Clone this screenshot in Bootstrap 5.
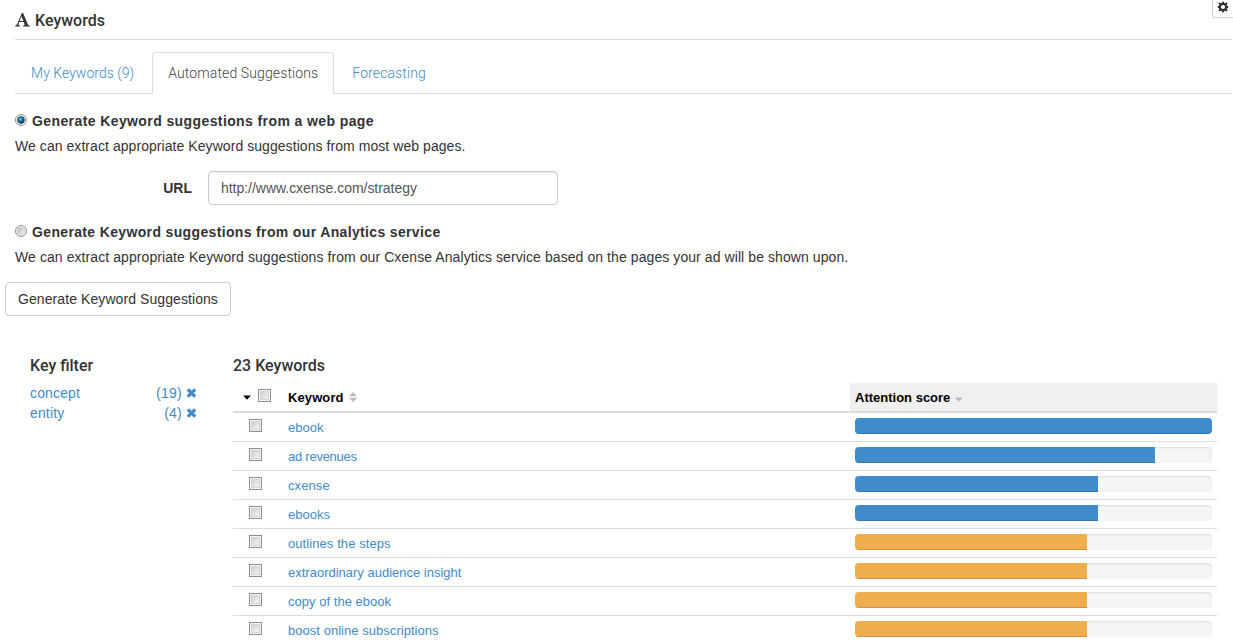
<!DOCTYPE html>
<html lang="en">
<head>
<meta charset="utf-8">
<title>Keywords</title>
<meta name="viewport" content="width=device-width, initial-scale=1">
<link href="https://cdn.jsdelivr.net/npm/bootstrap@5.3.0/dist/css/bootstrap.min.css" rel="stylesheet">
<style>
:root{--ui:"Liberation Sans",Arial,sans-serif;--head:Roboto,sans-serif;--blue:#428bca;--line:#ddd}
html,body{overflow:hidden}
body{font:14px/20px var(--ui);color:#333;background:#fff;height:644px}
a{color:var(--blue);text-decoration:none}
.page{padding-left:15px;padding-right:1px}
.title-bar{height:40px;border-bottom:1px solid var(--line);position:relative}
.heading{font:500 16px/20px var(--head);margin:0}
.heading span{position:relative;top:1px}
.gear{position:absolute;right:-1px;top:-5px;width:21px;height:23px;border:1px solid #ccc;border-right:0;border-radius:0 0 0 3px;padding:5px 0 0 4px;background:#fff;line-height:1}
.gear svg{display:block}
.nav-tabs{margin-top:12px;height:42px;--bs-nav-tabs-border-color:#ddd;font:300 14px/20px var(--head)}
.nav-tabs .nav-link{height:42px;padding:10px 15px;border-radius:4px 4px 0 0;color:var(--blue);margin-right:2px}
.nav-tabs .nav-link.active{color:#444;border-color:#ddd #ddd #fff}
.t-my{letter-spacing:.03px}.t-auto{letter-spacing:.12px}.t-fore{letter-spacing:.11px}
.opt{font-weight:700;height:20px;gap:5px}
.t-opt1{letter-spacing:.4px}.t-opt2{letter-spacing:.35px}
.t-p1{letter-spacing:.06px}.t-p2{letter-spacing:.08px}
.t-link{letter-spacing:-.03px}.t-gen{letter-spacing:.08px}.t-con{letter-spacing:.15px}
.radio-dot{width:12px;height:12px;flex:none;margin-top:-2px}
.url-label{width:177px;font-weight:700;text-align:right}
.url-box{width:350px;height:34px;padding:6px 12px;font-size:14px;line-height:20px;color:#555;border:1px solid #ccc;border-radius:4px;box-shadow:inset 0 1px 1px rgba(0,0,0,.075)}
.gen{margin-left:-10px;width:226px;height:34px;padding:6px 0;font-size:14px;line-height:20px;border:1px solid #ccc;border-radius:4px;background:#fff;color:#333}
.filter{width:168px;margin:0 35px 0 15px}
.count{letter-spacing:.25px}
.cross{width:11px;height:10px;margin:5px 1px 0 4px}
.kw-table{width:984px;font-size:13px}
.kw-row{height:29px;border-bottom:1px solid var(--line)}
.kw-head{height:30px;border-bottom:2px solid var(--line);font-weight:700;color:#000}
.kw-head span{padding-top:2px}
.c-check{width:50px}.c-name{width:567px;padding-left:5px}.c-score{width:367px;padding:0 5px}
.kw-head .c-score{background:#f0f0f0;height:28px}
.box{display:block;width:13px;height:13px;border:1px solid #8e8f8f;background:linear-gradient(135deg,#c3c6ce,#f6f6f6 85%);box-shadow:inset 0 0 0 1px #f4f4f4,inset 0 0 0 2px #d0d2d6}
.kw-row .box{margin:-3px 0 0 16px}
.kw-row .c-name{padding-top:2px}
.progress{height:16px;margin-top:-2px;border-radius:4px;background:#f5f5f5;box-shadow:inset 0 1px 2px rgba(0,0,0,.1)}
.progress-bar{background:var(--blue);box-shadow:inset 0 -1px 0 rgba(0,0,0,.15)}
.progress-bar.amber{background:#f0ad4e}
</style>
</head>
<body>
<svg class="position-absolute" width="0" height="0"><defs>
<symbol id="cross" viewBox="0 0 11 10"><path d="M1.800 1.300l7.400 7.400M9.200 1.300L1.800 8.700" stroke="#428bca" stroke-width="3.200" fill="none"/></symbol>
<radialGradient id="ball" cx=".4" cy=".35" r=".7"><stop offset="0" stop-color="#8fd8fa"/><stop offset=".35" stop-color="#2486bd"/><stop offset="1" stop-color="#072c48"/></radialGradient>
<linearGradient id="well" x2="1" y2="1"><stop offset="0" stop-color="#b4b7bb"/><stop offset="1" stop-color="#f7f7f7"/></linearGradient>
</defs></svg>
<main class="page">
  <header class="title-bar d-flex">
    <h1 class="heading d-flex" style="padding-top:10px">
      <svg width="15" height="14" viewBox="0 0 15 14" style="margin:3px 5px 0 0"><path d="M6.900 0h1.200l4.800 11.500q.4 1 1.800 1v.9H8.200v-.9q1.700 0 1.300-1.200L8.800 9H4.300l-.7 1.900q-.5 1.600 1.300 1.600v.9H.3v-.9q1.300-.1 1.900-1.500zM6.500 3.300L4.700 8h3.700z" fill="#333"/></svg>
      <span>Keywords</span></h1>
    <div class="gear"><svg width="12" height="12" viewBox="0 0 12 12"><g stroke="#333" fill="none"><circle cx="6" cy="6" r="3.200" stroke-width="2.200"/><path d="M6 .8v2M6 9.200v2M.8 6h2M9.200 6h2M2 2l1.400 1.400M8.600 8.600L10 10M2 10l1.400-1.400M8.600 3.400L10 2" stroke-width="2"/></g></svg></div>
  </header>
  <ul class="nav nav-tabs">
    <li class="nav-item"><a class="nav-link" href="#"><span class="t-my">My Keywords (9)</span></a></li>
    <li class="nav-item"><a class="nav-link active" href="#"><span class="t-auto">Automated Suggestions</span></a></li>
    <li class="nav-item"><a class="nav-link" href="#"><span class="t-fore">Forecasting</span></a></li>
  </ul>
  <label class="opt d-flex align-items-center" style="margin-top:17px">
    <svg class="radio-dot" viewBox="0 0 12 12"><circle cx="6" cy="6" r="5.500" fill="#f4f4f4" stroke="#8e8f8f"/><circle cx="6" cy="6" r="3.400" fill="url(#ball)" stroke="#16405f" stroke-width=".8"/></svg>
    <span class="t-opt1">Generate Keyword suggestions from a web page</span></label>
  <p style="margin:5px 0 15px"><span class="t-p1">We can extract appropriate Keyword suggestions from most web pages.</span></p>
  <div class="d-flex align-items-center gap-3">
    <div class="url-label">URL</div>
    <div class="url-box"><span class="t-link">http://www.cxense.com/strategy</span></div>
  </div>
  <label class="opt d-flex align-items-center" style="margin-top:17px">
    <svg class="radio-dot" viewBox="0 0 12 12"><circle cx="6" cy="6" r="5.500" fill="#f4f4f4" stroke="#8e8f8f"/><circle cx="6" cy="6" r="3.800" fill="url(#well)" stroke="#c4c7cb" stroke-width=".6"/></svg>
    <span class="t-opt2">Generate Keyword suggestions from our Analytics service</span></label>
  <p style="margin:5px 0 15px"><span class="t-p2">We can extract appropriate Keyword suggestions from our Cxense Analytics service based on the pages your ad will be shown upon.</span></p>
  <button class="btn gen d-block"><span class="t-gen">Generate Keyword Suggestions</span></button>
  <div class="d-flex" style="margin-top:39px">
    <aside class="filter">
      <h2 class="heading"><span>Key filter</span></h2>
      <div class="d-flex" style="margin-top:8px"><a href="#" class="me-auto t-con">concept</a><a href="#" class="count">(19)</a><svg class="cross"><use href="#cross"/></svg></div>
      <div class="d-flex"><a href="#" class="me-auto t-con">entity</a><a href="#" class="count">(4)</a><svg class="cross"><use href="#cross"/></svg></div>
    </aside>
    <section class="kw-table">
      <h2 class="heading"><span>23 Keywords</span></h2>
      <div class="kw-head d-flex align-items-center" style="margin-top:8px">
        <div class="c-check d-flex align-items-center"><svg width="8" height="5" style="margin:0 7px 0 10px"><path d="M0 .5h8L4 4.800z"/></svg><i class="box" style="margin-top:-3px"></i></div>
        <div class="c-name d-flex align-items-center"><span style="letter-spacing:.1px">Keyword</span><svg width="8" height="10" style="margin-left:5px"><path d="M0 4.200L4 0l4 4.200zM0 5.800L4 10l4-4.200z" fill="#bbb"/></svg></div>
        <div class="c-score d-flex align-items-center"><span>Attention score</span><svg width="8" height="5" style="margin:4px 0 0 5px"><path d="M0 .5h8L4 4.800z" fill="#bbb"/></svg></div>
      </div>
      <div id="rows"></div>
    </section>
  </div>
</main>
<script>
const rows=[["ebook",100,0],["ad revenues",84,-.25],["cxense",68,.1],["ebooks",68,0],["outlines the steps",65,.08],["extraordinary audience insight",65,0],["copy of the ebook",65,.03],["boost online subscriptions",65,.04]];
document.getElementById("rows").innerHTML=rows.map(([name,score,track])=>`<div class="kw-row d-flex align-items-center"><div class="c-check"><i class="box"></i></div><div class="c-name"><a href="#" style="letter-spacing:${track}px">${name}</a></div><div class="c-score"><div class="progress"><div class="progress-bar${score<66?" amber":""}" style="width:${score}%"></div></div></div></div>`).join("");
</script>
<script src="https://cdn.jsdelivr.net/npm/bootstrap@5.3.0/dist/js/bootstrap.bundle.min.js"></script>
</body>
</html>
